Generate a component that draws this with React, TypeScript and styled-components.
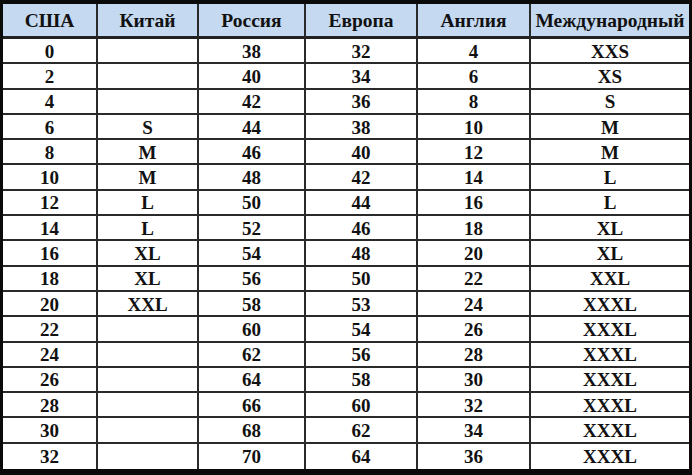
import React from 'react';
import styled, { createGlobalStyle } from 'styled-components';

const GlobalStyle = createGlobalStyle`
  html, body {
    margin: 0;
    padding: 0;
    background: #ffffff;
  }
  * {
    box-sizing: border-box;
  }
`;

// Таблица размеров
const Table = styled.div`
  width: 692px;
  height: 475px;
  display: grid;
  grid-template-columns: 95px 101px 107px 112px 113px 1fr;
  grid-template-rows: 35px repeat(17, 1fr);
  border-style: solid;
  border-color: #0a0a0a;
  border-width: 4px 3px 6px 3px;
  background: #ffffff;
  font-family: "Liberation Serif", "Times New Roman", serif;
  font-weight: bold;
  color: #111111;
`;

const Cell = styled.div<{ $head?: boolean; $lastCol?: boolean; $lastRow?: boolean }>`
  display: flex;
  align-items: center;
  justify-content: center;
  font-size: ${(p) => (p.$head ? '19.5px' : '19px')};
  background: ${(p) => (p.$head ? '#c5d9f1' : '#ffffff')};
  border-right: ${(p) => (p.$lastCol ? 'none' : '2px solid #2a2a2a')};
  border-bottom: ${(p) => (p.$lastRow ? 'none' : p.$head ? '3px solid #222' : '2px solid #2a2a2a')};
  padding-top: 1px;
  line-height: 1;
  white-space: nowrap;
`;

const headers = ['США', 'Китай', 'Россия', 'Европа', 'Англия', 'Международный'];

const rows: string[][] = [
  ['0', '', '38', '32', '4', 'XXS'],
  ['2', '', '40', '34', '6', 'XS'],
  ['4', '', '42', '36', '8', 'S'],
  ['6', 'S', '44', '38', '10', 'M'],
  ['8', 'M', '46', '40', '12', 'M'],
  ['10', 'M', '48', '42', '14', 'L'],
  ['12', 'L', '50', '44', '16', 'L'],
  ['14', 'L', '52', '46', '18', 'XL'],
  ['16', 'XL', '54', '48', '20', 'XL'],
  ['18', 'XL', '56', '50', '22', 'XXL'],
  ['20', 'XXL', '58', '53', '24', 'XXXL'],
  ['22', '', '60', '54', '26', 'XXXL'],
  ['24', '', '62', '56', '28', 'XXXL'],
  ['26', '', '64', '58', '30', 'XXXL'],
  ['28', '', '66', '60', '32', 'XXXL'],
  ['30', '', '68', '62', '34', 'XXXL'],
  ['32', '', '70', '64', '36', 'XXXL'],
];

const App: React.FC = () => {
  return (
    <>
      <GlobalStyle />
      <Table>
        {headers.map((h, i) => (
          <Cell key={h} $head $lastCol={i === headers.length - 1}>
            {h}
          </Cell>
        ))}
        {rows.map((row, r) =>
          row.map((v, c) => (
            <Cell
              key={`${r}-${c}`}
              $lastCol={c === row.length - 1}
              $lastRow={r === rows.length - 1}
            >
              {v}
            </Cell>
          ))
        )}
      </Table>
    </>
  );
};

export default App;
